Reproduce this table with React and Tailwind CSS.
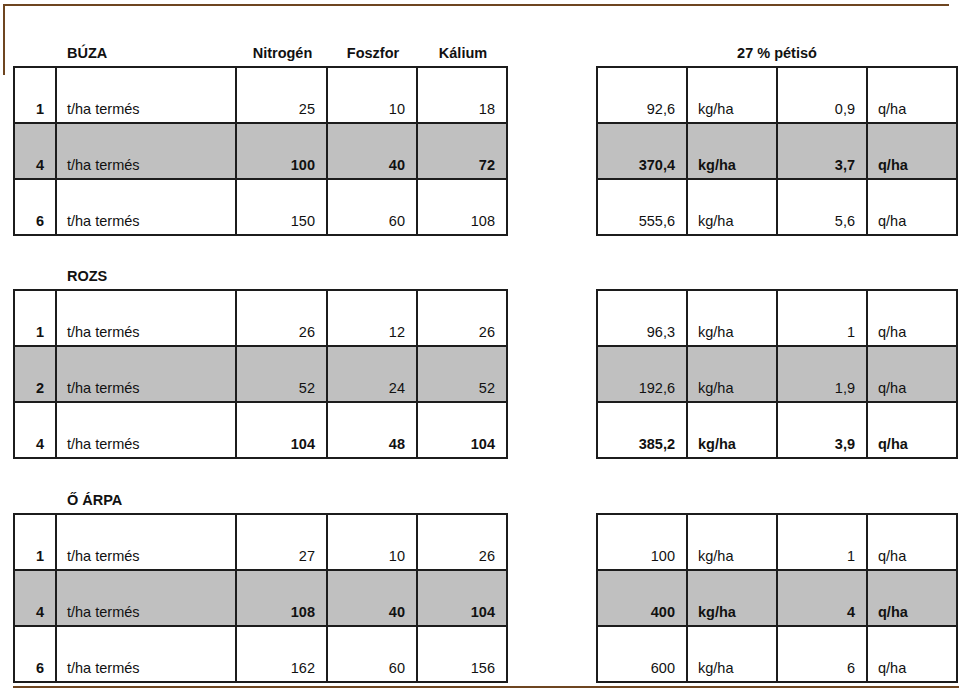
const sections = [
  {
    title: "BÚZA",
    headerClass: "h-[28px]",
    rows: [
      { n: "1", vals: ["25", "10", "18"], kg: "92,6", q: "0,9", gray: false, bold: false },
      { n: "4", vals: ["100", "40", "72"], kg: "370,4", q: "3,7", gray: true, bold: true },
      { n: "6", vals: ["150", "60", "108"], kg: "555,6", q: "5,6", gray: false, bold: false },
    ],
  },
  {
    title: "ROZS",
    headerClass: "h-[53px]",
    rows: [
      { n: "1", vals: ["26", "12", "26"], kg: "96,3", q: "1", gray: false, bold: false },
      { n: "2", vals: ["52", "24", "52"], kg: "192,6", q: "1,9", gray: true, bold: false },
      { n: "4", vals: ["104", "48", "104"], kg: "385,2", q: "3,9", gray: false, bold: true },
    ],
  },
  {
    title: "Ő ÁRPA",
    headerClass: "h-[54px]",
    rows: [
      { n: "1", vals: ["27", "10", "26"], kg: "100", q: "1", gray: false, bold: false },
      { n: "4", vals: ["108", "40", "104"], kg: "400", q: "4", gray: true, bold: true },
      { n: "6", vals: ["162", "60", "156"], kg: "600", q: "6", gray: false, bold: false },
    ],
  },
];

function Cell({ children, gray, bold, right }) {
  return (
    <div
      className={`flex items-end h-[54px] pb-[5px] leading-[16px] ${
        gray ? "bg-[#c0c0c0]" : "bg-white"
      } ${bold ? "font-bold" : ""} ${right ? "justify-end pr-[11px]" : "pl-[10px]"}`}
    >
      {children}
    </div>
  );
}

function Section({ section, first }) {
  return (
    <div className="flex flex-col">
      <div className={`flex items-end pb-[5px] leading-[16px] font-bold ${section.headerClass}`}>
        <div className="w-[495px] flex">
          <div className="w-[44px]" />
          <div className="w-[180px] pl-[10px]">{section.title}</div>
          {first && (
            <>
              <div className="w-[91px] text-center">Nitrogén</div>
              <div className="w-[90px] text-center">Foszfor</div>
              <div className="w-[90px] text-center">Kálium</div>
            </>
          )}
        </div>
        {first && <div className="ml-[88px] w-[362px] text-center">27 % pétisó</div>}
      </div>

      <div className="flex">
        <div className="grid grid-cols-[40px_178px_89px_88px_88px] gap-[2px] p-[2px] bg-[#1c1c1c] w-[495px]">
          {section.rows.map((r, i) => [
            <Cell key={`n${i}`} gray={r.gray} bold right>
              {r.n}
            </Cell>,
            <Cell key={`t${i}`} gray={r.gray}>
              t/ha termés
            </Cell>,
            ...r.vals.map((v, j) => (
              <Cell key={`v${i}${j}`} gray={r.gray} bold={r.bold} right>
                {v}
              </Cell>
            )),
          ])}
        </div>
        <div className="ml-[88px] grid grid-cols-[88px_88px_88px_88px] gap-[2px] p-[2px] bg-[#1c1c1c] w-[362px]">
          {section.rows.map((r, i) => [
            <Cell key={`k${i}`} gray={r.gray} bold={r.bold} right>
              {r.kg}
            </Cell>,
            <Cell key={`ku${i}`} gray={r.gray} bold={r.bold}>
              kg/ha
            </Cell>,
            <Cell key={`q${i}`} gray={r.gray} bold={r.bold} right>
              {r.q}
            </Cell>,
            <Cell key={`qu${i}`} gray={r.gray} bold={r.bold}>
              q/ha
            </Cell>,
          ])}
        </div>
      </div>
    </div>
  );
}

export default function App() {
  return (
    <div
      className="relative w-[960px] h-[689px] overflow-hidden bg-white text-[14.5px] text-[#111]"
      style={{ fontFamily: '"Liberation Sans", Arial, sans-serif' }}
    >
      {/* slide frame corner */}
      <div className="absolute left-[3px] top-[4px] w-[946px] h-[71px] border-t-2 border-l-2 border-[#6e4520]" />

      <div className="pl-[13px] pt-[38px] flex flex-col">
        {sections.map((s, i) => (
          <Section key={s.title} section={s} first={i === 0} />
        ))}
        <div className="mt-[3px] h-[2px] w-[946px] bg-[#6e4520]" />
      </div>
    </div>
  );
}
